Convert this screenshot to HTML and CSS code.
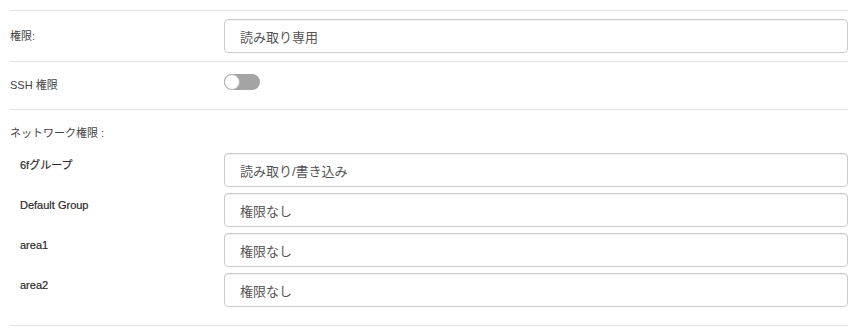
FILE: index.html
```html
<!DOCTYPE html>
<html lang="ja">
<head>
<meta charset="utf-8">
<link rel="stylesheet" href="styles.css">
</head>
<body>
<div class="form">
  <div class="row row-perm">
    <div class="label">権限:</div>
    <div class="control"><div class="select">読み取り専用</div></div>
  </div>
  <div class="row row-ssh">
    <div class="label label-ssh">SSH 権限</div>
    <div class="control"><span class="toggle"><span class="knob"></span></span></div>
  </div>
  <div class="section">
    <div class="heading">ネットワーク権限 :</div>
    <div class="sub">
      <div class="sublabel">6fグループ</div>
      <div class="select">読み取り/書き込み</div>
    </div>
    <div class="sub">
      <div class="sublabel">Default Group</div>
      <div class="select">権限なし</div>
    </div>
    <div class="sub">
      <div class="sublabel">area1</div>
      <div class="select">権限なし</div>
    </div>
    <div class="sub">
      <div class="sublabel">area2</div>
      <div class="select">権限なし</div>
    </div>
  </div>
</div>
</body>
</html>
```

FILE: styles.css
```css
html, body {
  margin: 0;
  padding: 0;
  background: #fff;
}
body {
  font-family: "Liberation Sans", Arial, "Noto Sans CJK JP", sans-serif;
  font-size: 11px;
  color: #444;
}
.form {
  margin: 10px 10px 0 10px;
}
.row {
  display: grid;
  grid-template-columns: 214px 1fr;
  border-top: 1px solid #e3e3e3;
}
.row-perm {
  padding: 8px 0;
  align-items: center;
}
.row-ssh {
  padding: 12px 0 13px;
  align-items: start;
}
.label {
  line-height: 16px;
}
.label-ssh {
  line-height: 22px;
}
.select {
  box-sizing: border-box;
  height: 34px;
  border: 1px solid #cccccc;
  border-radius: 4px;
  box-shadow: inset 0 1px 1px rgba(0, 0, 0, 0.06);
  padding: 0 15px;
  display: flex;
  align-items: center;
  font-family: "Liberation Sans", Arial, "Noto Sans CJK JP", sans-serif;
  font-size: 13px;
  color: #555;
}
.toggle {
  display: block;
  position: relative;
  width: 36px;
  height: 16px;
  border-radius: 8px;
  background: #a4a4a4;
}
.knob {
  position: absolute;
  left: 0;
  top: 0;
  box-sizing: border-box;
  width: 16px;
  height: 16px;
  border-radius: 50%;
  background: #fff;
  border: 1px solid #b5b5b5;
}
.section {
  border-top: 1px solid #e3e3e3;
  border-bottom: 1px solid #e3e3e3;
  padding: 13px 0 18px;
}
.heading {
  line-height: 20px;
  margin-bottom: 10px;
}
.sub {
  display: grid;
  grid-template-columns: 204px 1fr;
  padding-left: 10px;
  margin-bottom: 6px;
  align-items: start;
}
.sub:last-child {
  margin-bottom: 0;
}
.sublabel {
  padding-top: 4px;
  line-height: 16px;
  font-size: 11px;
  color: #2a2a2a;
  -webkit-text-stroke: 0.2px #2a2a2a;
}
```
